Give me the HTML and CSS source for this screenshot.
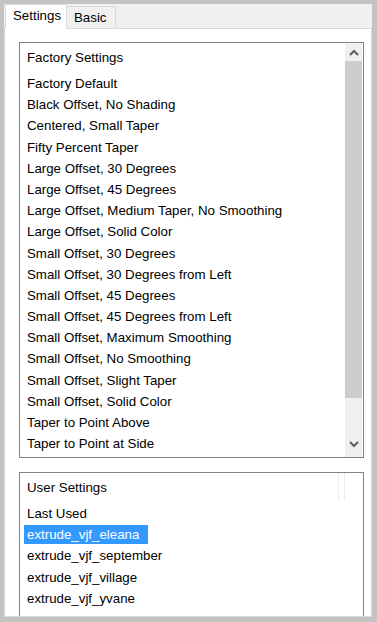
FILE: index.html
```html
<!DOCTYPE html>
<html>
  <head>
    <title>Extrude settings</title>
    <link rel="stylesheet" href="styles.css">
  </head>
  <body>
    <div class="window">
      <div class="tabs">
        <div class="tab tab-active">Settings</div>
        <div class="tab">Basic</div>
      </div>

      <div class="panel">
        <!-- factory presets -->
        <div class="listbox listbox-factory">
          <div class="list">
            <div class="list-head">Factory Settings</div>
            <ul class="items">
              <li>Factory Default</li>
              <li>Black Offset, No Shading</li>
              <li>Centered, Small Taper</li>
              <li>Fifty Percent Taper</li>
              <li>Large Offset, 30 Degrees</li>
              <li>Large Offset, 45 Degrees</li>
              <li>Large Offset, Medium Taper, No Smoothing</li>
              <li>Large Offset, Solid Color</li>
              <li>Small Offset, 30 Degrees</li>
              <li>Small Offset, 30 Degrees from Left</li>
              <li>Small Offset, 45 Degrees</li>
              <li>Small Offset, 45 Degrees from Left</li>
              <li>Small Offset, Maximum Smoothing</li>
              <li>Small Offset, No Smoothing</li>
              <li>Small Offset, Slight Taper</li>
              <li>Small Offset, Solid Color</li>
              <li>Taper to Point Above</li>
              <li>Taper to Point at Side</li>
            </ul>
          </div>
          <div class="scrollbar">
            <div class="scroll-btn">
              <svg width="10" height="7" viewBox="0 0 10 7"><path d="M1 6 L5 2 L9 6" fill="none" stroke="#606060" stroke-width="2"/></svg>
            </div>
            <div class="scroll-thumb"></div>
            <div class="scroll-track"></div>
            <div class="scroll-btn scroll-btn-down">
              <svg width="10" height="7" viewBox="0 0 10 7"><path d="M1 1 L5 5 L9 1" fill="none" stroke="#606060" stroke-width="2"/></svg>
            </div>
          </div>
        </div>

        <!-- user presets -->
        <div class="listbox listbox-user">
          <div class="list">
            <div class="list-head list-head-cols">User Settings</div>
            <ul class="items">
              <li>Last Used</li>
              <li><span class="selected">extrude_vjf_eleana</span></li>
              <li>extrude_vjf_september</li>
              <li>extrude_vjf_village</li>
              <li>extrude_vjf_yvane</li>
            </ul>
          </div>
        </div>
      </div>
    </div>
  </body>
</html>
```

FILE: styles.css
```css
body {
  margin: 0;
  background: #c3c3c3;
  font-family: "Liberation Sans", Arial, sans-serif;
  font-size: 13.3px;
  color: #000;
}

.window {
  width: 377px;
  height: 622px;
  box-sizing: border-box;
  padding: 4px 5px 5px 4px;
  display: flex;
  flex-direction: column;
  background: #c3c3c3;
}

.tabs {
  height: 24px;
  display: flex;
  align-items: flex-end;
  padding-left: 1px;
  background: #f0f0f0;
}

.tab {
  box-sizing: border-box;
  width: 49px;
  height: 22px;
  line-height: 22px;
  padding-left: 7px;
  background: #f0f0f0;
  border: 1px solid #d9d9d9;
  border-left: none;
  border-bottom: none;
}

.tab-active {
  width: 62px;
  height: 25px;
  line-height: 21px;
  padding-left: 7px;
  margin-bottom: -1px;
  background: #fff;
  border-left: 1px solid #d9d9d9;
  position: relative;
}

.panel {
  flex: 1;
  min-height: 0;
  overflow: hidden;
  background: #fff;
  border: 1px solid #d9d9d9;
  padding: 13px 7px 0 14px;
}

.listbox {
  display: flex;
  box-sizing: border-box;
  border: 1px solid #828282;
  background: #fff;
}

.listbox-factory {
  height: 416px;
}

.listbox-user {
  height: 200px;
  margin-top: 14px;
}

.list {
  flex: 1;
  overflow: hidden;
}

.list-head {
  height: 28px;
  line-height: 30px;
  padding-left: 7px;
  margin-bottom: 2px;
}

.list-head-cols {
  position: relative;
}

.list-head-cols::after {
  content: "";
  position: absolute;
  top: 0;
  right: 18px;
  width: 5px;
  height: 28px;
  border-left: 1px solid #ececec;
  border-right: 1px solid #ececec;
}

.items {
  list-style: none;
  margin: 0;
  padding: 0 0 0 4px;
}

.items li {
  height: 21.2px;
  line-height: 22px;
  padding-left: 3px;
  white-space: nowrap;
}

.selected {
  display: inline-block;
  margin-left: -3px;
  padding: 0 9px 0 3px;
  line-height: 19px;
  background: #3399ff;
  color: #fff;
}

.scrollbar {
  width: 17px;
  margin-right: 1px;
  display: flex;
  flex-direction: column;
  background: #f0f0f0;
}

.scroll-btn {
  height: 18px;
  display: flex;
  align-items: center;
  justify-content: center;
}

.scroll-btn-down {
  align-items: flex-start;
  padding-top: 2px;
  box-sizing: border-box;
}

.scroll-thumb {
  height: 337px;
  background: #cdcdcd;
}

.scroll-track {
  flex: 1;
}
```
